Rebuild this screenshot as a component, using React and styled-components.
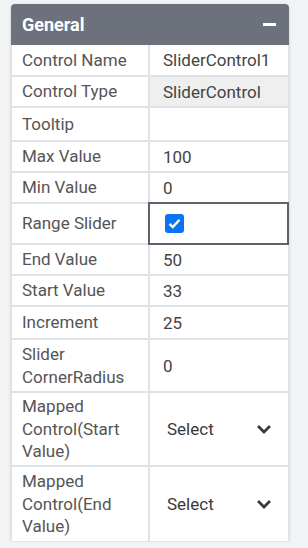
import React from 'react';
import styled, { createGlobalStyle } from 'styled-components';

const GlobalStyle = createGlobalStyle`
  body {
    margin: 0;
    background: #f2f3f5;
    font-family: Roboto, "Liberation Sans", sans-serif;
  }
`;

const rows = [
  { label: 'Control Name', value: 'SliderControl1', h: 32 },
  { label: 'Control Type', value: 'SliderControl', h: 31, readOnly: true },
  { label: 'Tooltip', value: '', h: 34 },
  { label: 'Max Value', value: '100', h: 31 },
  { label: 'Min Value', value: '0', h: 31 },
  { label: 'Range Slider', type: 'check', h: 41 },
  { label: 'End Value', value: '50', h: 31 },
  { label: 'Start Value', value: '33', h: 31 },
  { label: 'Increment', value: '25', h: 33 },
  { label: 'Slider CornerRadius', value: '0', h: 53 },
  { label: 'Mapped Control(Start Value)', type: 'select', h: 74 },
  { label: 'Mapped Control(End Value)', type: 'select', h: 75 },
];

function Chevron() {
  return (
    <svg width="16" height="10" viewBox="0 0 16 10">
      <path d="M2 2 L8 8 L14 2" fill="none" stroke="#3a3a3a" strokeWidth="2.8" />
    </svg>
  );
}

function Check() {
  return (
    <CheckBox>
      <svg width="13" height="11" viewBox="0 0 13 11">
        <path d="M1.5 5.8 L4.8 9 L11.5 1.8" fill="none" stroke="#fff" strokeWidth="2.4" />
      </svg>
    </CheckBox>
  );
}

function App() {
  return (
    <>
      <GlobalStyle />
      <Panel>
        <Header>
          <span>General</span>
          <Minus />
        </Header>
        {rows.map((r) => (
          <Row key={r.label} $h={r.h}>
            <Label>{r.label}</Label>
            {r.type === 'check' && (
              <Value $focused>
                <Check />
              </Value>
            )}
            {r.type === 'select' && (
              <Value>
                <SelectBox>
                  <span>Select</span>
                  <Chevron />
                </SelectBox>
              </Value>
            )}
            {!r.type && <Value $readOnly={r.readOnly}>{r.value}</Value>}
          </Row>
        ))}
      </Panel>
    </>
  );
}

const Panel = styled.div`
  width: 278px;
  margin: 4px 0 0 11px;
  background: #fff;
  border-radius: 4px;
  overflow: hidden;
  box-shadow: 0 1px 3px rgba(0, 0, 0, 0.18);
`;

const Header = styled.div`
  height: 41px;
  background: #6c717b;
  display: flex;
  align-items: center;
  justify-content: space-between;
  padding: 0 13px 0 11px;
  color: #fff;
  font-weight: bold;
  font-size: 18px;
`;

const Minus = styled.div`
  width: 13px;
  height: 3px;
  background: #fff;
`;

const Row = styled.div`
  display: grid;
  grid-template-columns: 138px 1fr;
  min-height: ${(p) => p.$h}px;
  border-bottom: 2px solid #dfe2e6;
  box-sizing: border-box;
  border-left: 1px solid #dfe2e6;
  border-right: 1px solid #dfe2e6;
  &:last-child {
    border-bottom: 1px solid #dfe2e6;
  }
`;

const Label = styled.div`
  display: flex;
  align-items: center;
  padding: 0 6px 0 10px;
  border-right: 2px solid #dfe2e6;
  color: #555;
  font-size: 17px;
  line-height: 22.5px;
`;

const Value = styled.div`
  display: flex;
  align-items: center;
  padding: 0 13px;
  color: #444;
  font-size: 17px;
  background: ${(p) => (p.$readOnly ? '#efefef' : '#fff')};
  box-shadow: ${(p) => (p.$focused ? 'inset 0 0 0 2px #5c636d' : 'none')};
  margin: ${(p) => (p.$focused ? '-2px -1px -2px -2px' : '0')};
  padding-left: ${(p) => (p.$focused ? '17px' : '13px')};
`;

const CheckBox = styled.div`
  width: 19px;
  height: 19px;
  border-radius: 3px;
  background: #0b74f0;
  display: flex;
  align-items: center;
  justify-content: center;
`;

const SelectBox = styled.div`
  flex: 1;
  display: flex;
  align-items: center;
  justify-content: space-between;
  padding: 0 3px 0 4px;
  font-size: 17px;
  color: #3a3a3a;
`;

export default App;
